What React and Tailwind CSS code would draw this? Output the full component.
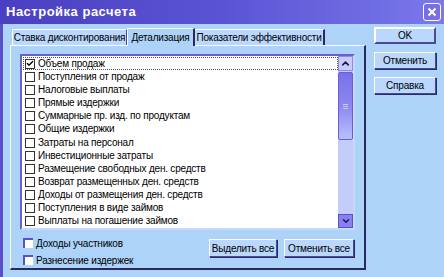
import { Check, ChevronUp, ChevronDown } from 'lucide-react'

const items = [
  'Объем продаж',
  'Поступления от продаж',
  'Налоговые выплаты',
  'Прямые издержки',
  'Суммарные пр. изд. по продуктам',
  'Общие издержки',
  'Затраты на персонал',
  'Инвестиционные затраты',
  'Размещение свободных ден. средств',
  'Возврат размещенных ден. средств',
  'Доходы от размещения ден. средств',
  'Поступления в виде займов',
  'Выплаты на погашение займов',
]

const font = { fontFamily: '"Liberation Sans", Arial, sans-serif' }

function Btn({ children, className = '' }) {
  return (
    <button
      className={`flex items-center justify-center whitespace-nowrap bg-[#b9d8fb] border border-t-white border-l-white border-r-[#4a4a9a] border-b-[#4a4a9a] shadow-[1px_1px_0_#2a2a6a] text-[10px] tracking-[-0.2px] text-black ${className}`}
    >
      {children}
    </button>
  )
}

export default function App() {
  return (
    <div className="w-[444px] h-[277px] overflow-hidden flex flex-col bg-[#5a4fc8]" style={font}>
      {/* Title bar */}
      <div className="h-[24px] shrink-0 flex items-center justify-between pl-[6px] pr-[3px] bg-gradient-to-r from-[#4a3fc0] via-[#5a54d4] to-[#7a78ea]">
        <span className="text-white font-bold text-[13px] tracking-[0.5px]">
          Настройка расчета
        </span>
        <div className="w-[18px] h-[18px] rounded-[3px] border border-white bg-[#7a6ee8] flex items-center justify-center">
          <svg width="10" height="10" viewBox="0 0 10 10">
            <path d="M1.5 1.5 L8.5 8.5 M8.5 1.5 L1.5 8.5" stroke="white" strokeWidth="2" />
          </svg>
        </div>
      </div>

      {/* Body */}
      <div className="flex-1 ml-[3px] bg-[#aed3f8] flex pt-[3px]">
        <div className="flex flex-col ml-[7px] w-[356px]">
          {/* Tabs */}
          <div className="flex items-end h-[18px] pl-[2px] text-[10px] tracking-[-0.2px] text-black whitespace-nowrap">
            <div className="w-[115px] h-[16px] flex items-center justify-center bg-[#b9d8fb] border-t border-l border-white border-r border-r-[#4a4a9a]">
              Ставка дисконтирования
            </div>
            <div className="w-[68px] h-[18px] flex items-center justify-center bg-[#aed3f8] border-t border-l border-white border-r-2 border-r-[#2a2a5a] -mb-px relative z-10">
              Детализация
            </div>
            <div className="w-[130px] h-[16px] flex items-center justify-center bg-[#b9d8fb] border-t border-white border-r-2 border-r-[#2a2a5a]">
              Показатели эффективности
            </div>
          </div>

          {/* Panel */}
          <div className="h-[225px] border-t border-l border-white border-r-2 border-b-2 border-r-[#2a2a5a] border-b-[#2a2a5a] pt-[8px] pl-[9px]">
            {/* List box */}
            <div className="w-[335px] h-[176px] bg-white border-2 border-[#6a60d0] border-r-[#c8d8fc] border-b-[#c8d8fc] flex">
              <div className="flex-1 flex flex-col pt-[1px] pl-[1px]">
                {items.map((t, i) => (
                  <div
                    key={t}
                    className={`h-[13.3px] flex items-center gap-[3px] text-[10px] tracking-[-0.2px] text-black whitespace-nowrap ${i === 0 ? 'border border-dotted border-[#555]' : 'border border-transparent'}`}
                  >
                    <span className="w-[10px] h-[10px] ml-[1px] border border-[#333] bg-white flex items-center justify-center">
                      {i === 0 && <Check size={9} strokeWidth={4} className="text-black" />}
                    </span>
                    <span className="leading-none">{t}</span>
                  </div>
                ))}
              </div>
              {/* Scrollbar */}
              <div className="w-[15px] flex flex-col bg-[#c4ccfa]">
                <div className="h-[15px] flex items-center justify-center bg-[#c8ccf8] border border-[#8c8ce8]">
                  <ChevronUp size={11} strokeWidth={3.5} className="text-[#1a1a5a]" />
                </div>
                <div className="h-[68px] mt-[1px] rounded-[2px] border border-[#6a5ed8] bg-gradient-to-b from-[#7a70e8] via-[#8c88f0] to-[#b8c0fc] flex items-center justify-center">
                  <div className="flex flex-col gap-[1px]">
                    <div className="w-[5px] h-px bg-[#c8ccf8]" />
                    <div className="w-[5px] h-px bg-[#c8ccf8]" />
                    <div className="w-[5px] h-px bg-[#c8ccf8]" />
                  </div>
                </div>
                <div className="flex-1" />
                <div className="h-[14px] flex items-center justify-center bg-[#8a7ef0] border border-[#5a50c8]">
                  <ChevronDown size={10} strokeWidth={3.5} className="text-[#1a1a5a]" />
                </div>
              </div>
            </div>

            {/* Bottom area */}
            <div className="flex mt-[7px] pr-[10px]">
              <div className="flex flex-col gap-[5px] pl-[3px] text-[10px] tracking-[-0.2px] text-black whitespace-nowrap">
                <label className="flex items-center gap-[3px] h-[12px]">
                  <span className="w-[10px] h-[10px] bg-white border-t-2 border-l-2 border-[#5a50d0]" />
                  Доходы участников
                </label>
                <label className="flex items-center gap-[3px] h-[12px]">
                  <span className="w-[10px] h-[10px] bg-white border-t-2 border-l-2 border-[#5a50d0]" />
                  Разнесение издержек
                </label>
              </div>
              <div className="flex-1 flex justify-end gap-[7px] pt-[2px]">
                <Btn className="w-[68px] h-[18px]">Выделить все</Btn>
                <Btn className="w-[70px] h-[18px]">Отменить все</Btn>
              </div>
            </div>
          </div>
        </div>

        {/* Right buttons */}
        <div className="flex flex-col ml-[8px] w-[62px]">
          <Btn className="h-[17px] border-2 border-[#2a2a5a] shadow-none">OK</Btn>
          <Btn className="h-[17px] mt-[8px]">Отменить</Btn>
          <Btn className="h-[17px] mt-[8px]">Справка</Btn>
        </div>
      </div>
    </div>
  )
}
